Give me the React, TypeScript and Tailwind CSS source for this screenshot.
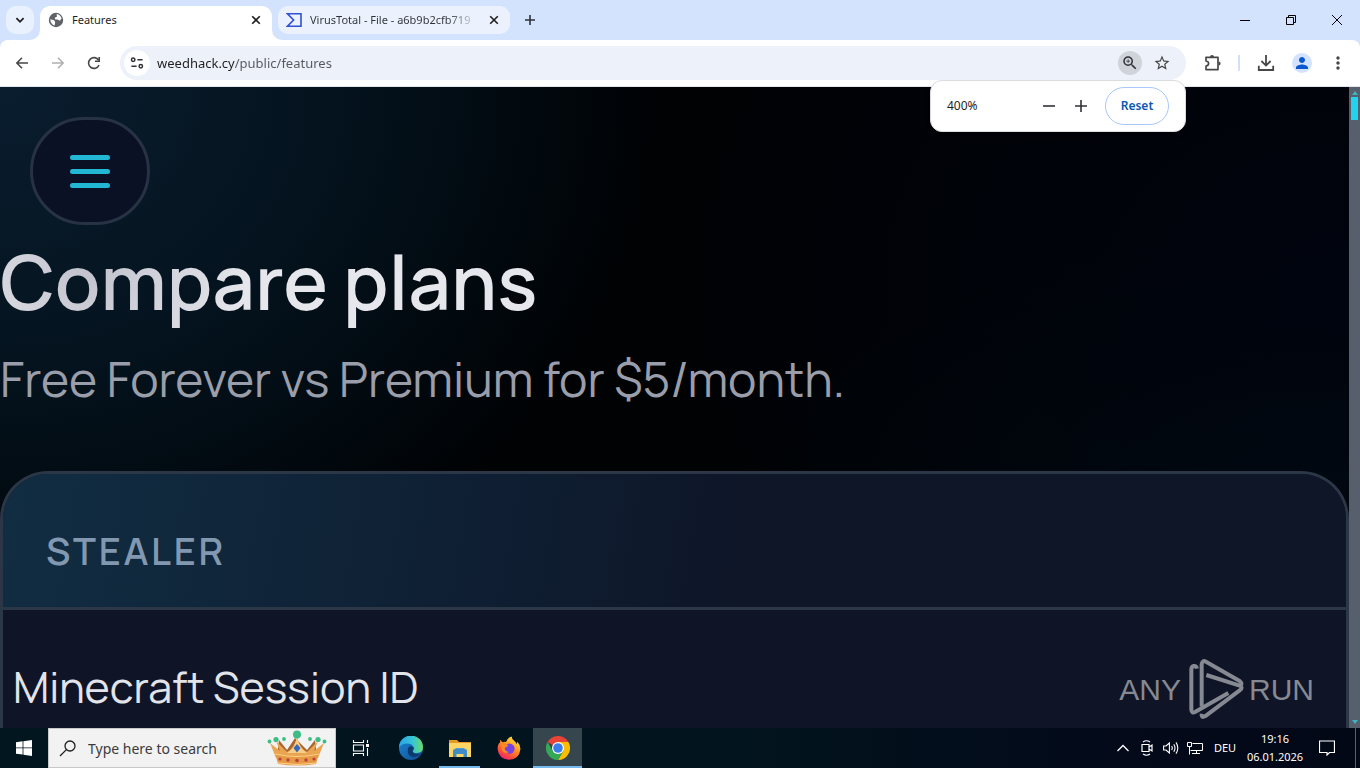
import React, { useState } from "react";
import { MdMoreVert, MdPerson, MdStarBorder, MdZoomIn } from "react-icons/md";

const iconButton =
  "flex items-center justify-center shrink-0 text-[#474747] cursor-pointer";

const GlobeIcon = () => (
  <svg viewBox="0 0 16 16" className="size-4 shrink-0">
    <circle cx="8" cy="8" r="7.2" fill="#5f6368" />
    <path
      d="M2.3 7.2 L6 8.2 L7.2 10 L6.6 13.6 Q2.6 12.2 2.3 7.2Z M8.6 2 Q12.6 2.6 13.6 6.6 L11.8 8.8 L9.6 7.6 L7.4 7.4 L6.6 6 L9 4.6Z"
      fill="#fff"
    />
  </svg>
);

const VirusTotalIcon = () => (
  <svg viewBox="0 0 16 16" className="size-4 shrink-0">
    <path
      d="M1.5 1.8 H15 V14.2 H1.5 L7.6 8Z"
      fill="none"
      stroke="#3050d8"
      strokeWidth="1.6"
    />
  </svg>
);

const CloseIcon = ({ className = "size-3" }) => (
  <svg viewBox="0 0 12 12" className={className}>
    <path
      d="M2.2 2.2 L9.8 9.8 M9.8 2.2 L2.2 9.8"
      stroke="#1f1f1f"
      strokeWidth="1.6"
      fill="none"
    />
  </svg>
);

const TabFlare = ({ className }) => (
  <svg viewBox="0 0 10 10" className={className}>
    <path d="M10 0 V10 H0 A10 10 0 0 0 10 0Z" fill="#fff" />
  </svg>
);

const TabStrip = () => (
  <div className="flex h-10 shrink-0 bg-[#d3e3fd]">
    <button
      aria-label="Search tabs"
      className="ml-1.5 mt-1.5 flex size-7 items-center justify-center rounded-[10px] bg-[#e9f1fe]"
    >
      <svg viewBox="0 0 10 10" className="size-2.5">
        <path
          d="M1.4 3.2 L5 6.8 L8.6 3.2"
          fill="none"
          stroke="#1f1f1f"
          strokeWidth="1.8"
        />
      </svg>
    </button>
    <div className="relative ml-1.5 mt-1.5 flex w-[232px] items-center rounded-t-[10px] bg-white pb-1.5 pl-2">
      <TabFlare className="absolute bottom-0 right-full size-2.5" />
      <TabFlare className="absolute bottom-0 left-full size-2.5 -scale-x-100" />
      <GlobeIcon />
      <span className="ml-2 flex-1 text-[11px] text-[#1f1f1f]">Features</span>
      <button aria-label="Close Features" className="mr-2.5">
        <CloseIcon />
      </button>
    </div>
    <div className="ml-1.5 mt-1.5 flex h-7 w-[232px] items-center rounded-[10px] bg-[#ebf2fe] pl-2">
      <VirusTotalIcon />
      <span className="ml-2 flex-1 whitespace-nowrap bg-[linear-gradient(90deg,#303236_80%,#d5dbe6_97%)] bg-clip-text text-[11px] text-transparent">
        VirusTotal - File - a6b9b2cfb719
      </span>
      <button aria-label="Close VirusTotal" className="ml-2 mr-2.5">
        <CloseIcon />
      </button>
    </div>
    <button
      aria-label="New tab"
      className="ml-1.5 mt-1.5 flex size-7 items-center justify-center"
    >
      <svg viewBox="0 0 12 12" className="size-3">
        <path d="M6 1 V11 M1 6 H11" stroke="#303236" strokeWidth="1.6" />
      </svg>
    </button>
    <div className="ml-auto flex">
      <button
        aria-label="Minimize"
        className="flex w-[46px] items-center justify-center"
      >
        <svg viewBox="0 0 10 10" className="size-2.5">
          <path d="M0 5.5 H10" stroke="#000" />
        </svg>
      </button>
      <button
        aria-label="Restore"
        className="flex w-[46px] items-center justify-center"
      >
        <svg viewBox="0 0 10 10" className="size-2.5">
          <path
            d="M0.5 2.5 H7.5 V9.5 H0.5Z M2.5 2.5 V0.5 H9.5 V7.5 H7.5"
            fill="none"
            stroke="#000"
          />
        </svg>
      </button>
      <button
        aria-label="Close window"
        className="flex w-[46px] items-center justify-center"
      >
        <svg viewBox="0 0 10 10" className="size-2.5">
          <path d="M0 0 L10 10 M10 0 L0 10" stroke="#000" />
        </svg>
      </button>
    </div>
  </div>
);

const Toolbar = () => {
  const [url, setUrl] = useState("weedhack.cy/public/features");
  return (
    <div className="shrink-0 bg-[#d3e3fd]">
      <div className="flex h-[47px] items-center rounded-t-lg border-b border-[#e3e6ea] bg-white px-1">
        <button aria-label="Back" className={`${iconButton} w-9`}>
          <svg viewBox="0 0 12 12" className="size-3">
            <path
              d="M12 6 H1 M6 0.8 L0.9 6 L6 11.2"
              fill="none"
              stroke="#474747"
              strokeWidth="1.5"
            />
          </svg>
        </button>
        <button aria-label="Forward" className={`${iconButton} w-9`}>
          <svg viewBox="0 0 12 12" className="size-3">
            <path
              d="M0 6 H11 M6 0.8 L11.1 6 L6 11.2"
              fill="none"
              stroke="#b0b0b0"
              strokeWidth="1.5"
            />
          </svg>
        </button>
        <button aria-label="Reload" className={`${iconButton} w-9`}>
          <svg viewBox="0 0 14 14" className="size-3.5">
            <path
              d="M12 9 A5.4 5.4 0 1 1 11.6 4.2"
              fill="none"
              stroke="#474747"
              strokeWidth="1.6"
            />
            <path
              d="M12.2 1 V5.2 H8"
              fill="none"
              stroke="#474747"
              strokeWidth="1.6"
            />
          </svg>
        </button>
        <div className="ml-2 flex h-[34px] flex-1 items-center rounded-full bg-[#edf1fa] pl-1">
          <button
            aria-label="View site information"
            className="flex size-[26px] items-center justify-center rounded-full bg-white"
          >
            <svg viewBox="0 0 14 12" className="h-3 w-3.5">
              <g fill="none" stroke="#303236" strokeWidth="1.5">
                <circle cx="3.2" cy="2.8" r="1.7" />
                <path d="M7.4 2.8 H12.6 M1.4 9.2 H6.6" />
                <circle cx="10.8" cy="9.2" r="1.7" />
              </g>
            </svg>
          </button>
          <input
            aria-label="Address and search bar"
            value={url}
            onChange={(e) => setUrl(e.target.value)}
            className="ml-[7px] min-w-0 flex-1 bg-[linear-gradient(90deg,#1f1f1f_78px,#54575c_78px)] bg-clip-text pt-0.5 text-[13px] text-transparent outline-none"
          />
          <button
            aria-label="Zoom"
            className="mr-2 flex size-6 items-center justify-center rounded-full bg-[#cfd3da] text-[#303236]"
          >
            <MdZoomIn className="size-[18px]" />
          </button>
          <button
            aria-label="Bookmark this tab"
            className="mr-3 flex size-6 items-center justify-center text-[#474747]"
          >
            <MdStarBorder className="size-[18px]" />
          </button>
        </div>
        <button aria-label="Extensions" className={`${iconButton} ml-2 w-9`}>
          <svg viewBox="0 0 18 18" className="size-[18px]">
            <path
              d="M3 3.4 H15 V15.6 H3 V12 Q5.6 11.6 5.6 9.5 Q5.6 7.4 3 7Z"
              fill="none"
              stroke="#474747"
              strokeWidth="1.7"
              strokeLinejoin="round"
            />
            <path
              d="M7 3 A2 2 0 0 1 11 3Z M15.6 7.4 A2 2 0 0 1 15.6 11.4Z"
              fill="#474747"
            />
          </svg>
        </button>
        <span className="mx-2 h-4 w-0.5 bg-[#d3e0f6]" />
        <button aria-label="Downloads" className={`${iconButton} w-9`}>
          <svg viewBox="0 0 18 18" className="size-[18px]">
            <path
              d="M9 1 V11.4 M4.4 7 L9 11.6 L13.6 7 M1.8 11.8 V16 H16.2 V11.8"
              fill="none"
              stroke="#474747"
              strokeWidth="1.8"
            />
          </svg>
        </button>
        <button aria-label="Profile" className={`${iconButton} w-9`}>
          <span className="flex size-5 items-center justify-center rounded-full bg-[#d3e3fd] text-[#0b57d0]">
            <MdPerson className="size-[18px]" />
          </span>
        </button>
        <button aria-label="Menu" className={`${iconButton} w-9`}>
          <MdMoreVert className="size-5" />
        </button>
      </div>
    </div>
  );
};

const ZoomBubble = () => (
  <div className="absolute right-[174px] top-20 flex h-[52px] w-64 items-center rounded-xl border border-[#dadce0] bg-white pl-4 pr-4 shadow-md">
    <span className="flex-1 text-[12px] text-[#1f1f1f]">400%</span>
    <button aria-label="Make text smaller" className={`${iconButton} w-8`}>
      <svg viewBox="0 0 12 12" className="size-3">
        <path d="M0 6 H12" stroke="#303236" strokeWidth="1.6" />
      </svg>
    </button>
    <button aria-label="Make text larger" className={`${iconButton} mr-2 w-8`}>
      <svg viewBox="0 0 12 12" className="size-3">
        <path d="M6 0 V12 M0 6 H12" stroke="#303236" strokeWidth="1.6" />
      </svg>
    </button>
    <button className="h-[38px] w-16 rounded-full border border-[#a8c7fa] text-[12px] font-semibold text-[#0b57b0]">
      Reset
    </button>
  </div>
);

const Watermark = () => (
  <div className="absolute bottom-2 right-[46px] flex items-center text-[#868992]">
    <span className="font-['Liberation_Sans',sans-serif] text-[30px]">ANY</span>
    <svg viewBox="16 16 168 184" className="ml-2 mr-1 h-[62px] w-14">
      <path
        d="M40 47 Q38 38 30 39 Q23 41 23 50 V170 Q24 182 34 177 L134 120 M54 160 V34 Q56 20 67 26 L168 84 Q180 94 166 100 M68 66 L168 98 Q180 104 168 112 L64 190 Q52 196 54 182"
        fill="none"
        stroke="currentColor"
        strokeWidth="12"
        strokeLinejoin="round"
      />
    </svg>
    <span className="font-['Liberation_Sans',sans-serif] text-[30px]">RUN</span>
  </div>
);

const Scrollbar = () => (
  <div className="flex w-[11px] shrink-0 flex-col items-center bg-[#585f6c] py-1">
    <span className="border-x-[3px] border-b-4 border-x-transparent border-b-[#3bb5c4]" />
    <span className="mt-0.5 h-[23px] w-[7px] bg-[#22d3ee]" />
    <span className="mt-auto border-x-[3px] border-t-4 border-x-transparent border-t-[#3bb5c4]" />
  </div>
);

const FeaturesPage = () => (
  <div className="relative flex min-h-0 flex-1 overflow-hidden font-['Manrope','Inter',sans-serif]">
    <main className="min-w-0 flex-1 overflow-hidden bg-[#000204] bg-[radial-gradient(ellipse_660px_560px_at_0%_0%,#0a1d2f_0%,#04131e_50%,transparent_100%),radial-gradient(ellipse_700px_500px_at_100%_30%,#00040e_0%,transparent_100%),radial-gradient(ellipse_600px_240px_at_100%_60%,#010d14_0%,transparent_100%)]">
      <button
        aria-label="Open menu"
        className="ml-[30px] mt-[30px] flex h-[108px] w-[120px] items-center justify-center rounded-full border-[3px] border-[#273244] bg-[#0b1124]"
      >
        <span className="flex flex-col gap-[9px]">
          <span className="h-[5px] w-10 rounded-full bg-[#22b8d3]" />
          <span className="h-[5px] w-10 rounded-full bg-[#22b8d3]" />
          <span className="h-[5px] w-10 rounded-full bg-[#22b8d3]" />
        </span>
      </button>
      <h1 className="mt-2 whitespace-nowrap bg-[radial-gradient(circle_at_90px_30px,#c0c1cc_0%,#e6e7ec_160px)] bg-clip-text text-[75px] font-semibold leading-[98px] text-transparent">
        Compare plans
      </h1>
      <p className="mt-3 whitespace-nowrap text-[48px] leading-[72px] text-[#9a9eaa]">
        Free Forever vs Premium for $5/month.
      </p>
      <table className="mt-14 block overflow-hidden rounded-t-[48px] border-[3px] border-b-0 border-[#2b3647] bg-[#0f1526] text-left">
        <thead className="block bg-[linear-gradient(100deg,#112d42_0%,#0f1f33_35%,#0e1628_55%)]">
          <tr className="block border-b-[3px] border-[#2b3647]">
            <th
              scope="col"
              className="block px-[43px] pb-8 pt-[52px] text-[38px] font-semibold leading-[49px] tracking-[0.07em] text-[#8298b0]"
            >
              STEALER
            </th>
          </tr>
        </thead>
        <tbody className="block">
          <tr className="block">
            <td className="block px-2.5 py-[47px] text-[43px] leading-[60px] text-[#e2e4ea]">
              Minecraft Session ID
            </td>
          </tr>
        </tbody>
      </table>
    </main>
    <Scrollbar />
    <Watermark />
  </div>
);

const CrownIcon = () => (
  <svg viewBox="0 0 64 36" className="h-9 w-16 shrink-0">
    <path d="M14 10 L22 20 L30 8 L42 20 L50 10 L52 26 H12Z" fill="#a8662f" />
    <path
      d="M5 13 L15 21 L11 11 L22 22 Q30 18 32 6 Q34 18 42 22 L53 11 L49 21 L59 13 L53 28 H11Z"
      fill="#e9a552"
    />
    <path d="M32 7 Q34 18 42 23 H22 Q30 18 32 7Z" fill="#f8cd86" />
    <path d="M10 23 Q32 29 54 23 L51 34 Q32 37 13 34Z" fill="#e79a46" />
    <path
      d="M10 24 Q32 29 54 24 M12.5 33 Q32 36 51.5 33"
      stroke="#ffd28c"
      strokeWidth="1"
      fill="none"
    />
    <g fill="#b8433c">
      <circle cx="15" cy="29" r="1.6" />
      <circle cx="23" cy="30" r="1.7" />
      <circle cx="32" cy="30.5" r="1.8" />
      <circle cx="41" cy="30" r="1.7" />
      <circle cx="49" cy="29" r="1.6" />
    </g>
    <path d="M32 14 L35.5 18 L32 22.5 L28.5 18Z" fill="#3468bd" />
    <g fill="#3bbd85">
      <circle cx="32" cy="4.5" r="4" />
      <circle cx="11" cy="9.5" r="2.6" />
      <circle cx="53" cy="9.5" r="2.6" />
      <circle cx="4.5" cy="11.5" r="1.9" />
      <circle cx="59.5" cy="11.5" r="1.9" />
      <circle cx="19" cy="9" r="1.9" />
      <circle cx="45" cy="9" r="1.9" />
    </g>
  </svg>
);

const EdgeIcon = () => (
  <svg viewBox="0 0 24 24" className="size-6">
    <defs>
      <linearGradient id="edgeTop" x1="0" y1="0.4" x2="1" y2="0.4">
        <stop offset="0" stopColor="#2aa4e8" />
        <stop offset="0.55" stopColor="#35c3d6" />
        <stop offset="1" stopColor="#68dc6c" />
      </linearGradient>
      <linearGradient id="edgeBottom" x1="0" y1="0" x2="1" y2="1">
        <stop offset="0" stopColor="#1988d8" />
        <stop offset="1" stopColor="#114a8c" />
      </linearGradient>
    </defs>
    <circle cx="12" cy="12" r="12" fill="url(#edgeBottom)" />
    <path
      d="M0 11.5 A12 12 0 0 1 24 11.6 Q24 17 18 17 Q13.4 17 13.8 14.8 Q15.6 13 14.6 11 Q12.8 7.6 8 7.6 Q2.6 7.8 0 11.5Z"
      fill="url(#edgeTop)"
    />
    <path
      d="M9 12 Q7.4 20.6 15.2 21 Q19 21 22.2 18.2 Q18 18.6 15.4 17.4 Q12.8 16 13.8 14.6 Q15 13.4 14.4 11.4 Q11 8.6 9 12Z"
      fill="#0d3a6e"
    />
  </svg>
);

const FolderIcon = () => (
  <svg viewBox="0 0 22 20" className="h-5 w-[22px]">
    <path d="M0 2 H8 L10 4 H22 V8 H0Z" fill="#e59a25" />
    <path d="M0 5 H22 V19 H0Z" fill="#fbd664" />
    <path d="M4 19 V13 Q4 11 6 11 H16 Q18 11 18 13 V19 H14.5 V16 H7.5 V19Z" fill="#3f8cc8" />
    <path d="M6.5 11 V10 H15.5 V11Z" fill="#4e9dd8" />
  </svg>
);

const FirefoxIcon = () => (
  <svg viewBox="0 0 24 24" className="size-6">
    <defs>
      <linearGradient id="foxBody" x1="0.8" y1="0" x2="0.2" y2="1">
        <stop offset="0" stopColor="#fff04a" />
        <stop offset="0.4" stopColor="#ff9a20" />
        <stop offset="0.75" stopColor="#ff4a3c" />
        <stop offset="1" stopColor="#e5188a" />
      </linearGradient>
    </defs>
    <path
      d="M3.4 3.6 Q4 6 6 6.2 Q7.4 5.6 9 6 Q10.8 1.4 14.8 0.4 Q14.4 3 17.4 5 Q19 6 19.4 8 Q20.4 7 20.2 5.4 Q23.6 9 23.4 13.2 Q22.2 23.4 12 23.8 Q1.6 23.2 0.6 13 Q0.6 8.4 3 6.6Z"
      fill="url(#foxBody)"
    />
    <circle cx="12.4" cy="12.6" r="5.2" fill="#7542e5" />
    <path
      d="M4.6 8.2 Q8 7 11.4 9.2 Q9.8 11.6 7.6 11.8 Q8 15.6 12 16 Q7.4 18.4 5 14.4 Q4 11 4.6 8.2Z"
      fill="#ff8a1e"
    />
  </svg>
);

const ChromeIcon = () => (
  <svg viewBox="0 0 24 24" className="size-6">
    <path d="M12 12 L1.6 6 A12 12 0 0 1 22.4 6Z" fill="#ea4335" />
    <path d="M12 6 H22.4 A12 12 0 0 1 12 24 L17.2 15Z" fill="#fbbc04" />
    <path d="M1.6 6 A12 12 0 0 0 12 24 L17.2 15 L6.8 15Z" fill="#34a853" />
    <circle cx="12" cy="12" r="6" fill="#fff" />
    <circle cx="12" cy="12" r="4.8" fill="#3b7ded" />
  </svg>
);

const Taskbar = () => (
  <footer className="flex h-10 shrink-0 bg-[linear-gradient(90deg,#02161f_0%,#02141d_55%,#030a1a_80%,#030817_100%)] text-[11px] text-white">
    <button aria-label="Start" className="flex w-12 items-center justify-center">
      <svg viewBox="0 0 16 16" className="size-4">
        <path
          d="M0 2.2 L6.6 1.3 V7.5 H0Z M7.4 1.2 L16 0 V7.5 H7.4Z M0 8.3 H6.6 V14.6 L0 13.7Z M7.4 8.3 H16 V16 L7.4 14.8Z"
          fill="#fff"
        />
      </svg>
    </button>
    <div className="flex w-72 items-center border border-[#c8c8c8] bg-[#f2f2f2] pl-2.5 pr-1.5">
      <svg viewBox="0 0 18 18" className="size-[18px] shrink-0">
        <path
          d="M1 17 L7.4 10.6"
          stroke="#1f1f1f"
          strokeWidth="1.3"
        />
        <circle
          cx="11"
          cy="7"
          r="5"
          fill="none"
          stroke="#1f1f1f"
          strokeWidth="1.3"
        />
      </svg>
      <input
        aria-label="Search"
        placeholder="Type here to search"
        className="ml-[11px] min-w-0 flex-1 text-[14px] text-[#3b3b3b] outline-none placeholder:text-[#3b3b3b]"
      />
      <CrownIcon />
    </div>
    <button
      aria-label="Task view"
      className="flex w-[50px] items-center justify-center"
    >
      <svg viewBox="0 0 18 16" className="h-4 w-[18px]">
        <path
          d="M1.5 0 V2.5 H11.5 V0 M1.5 5 H11.5 V11 H1.5Z M1.5 16 V13.5 H11.5 V16 M15.5 0 V3 M15.5 8 V16"
          fill="none"
          stroke="#fff"
          strokeWidth="1.1"
        />
        <path d="M14 4 H17 V7 H14Z" fill="#fff" />
      </svg>
    </button>
    <button aria-label="Edge" className="flex w-[49px] items-center justify-center">
      <EdgeIcon />
    </button>
    <button
      aria-label="File Explorer"
      className="mx-1 flex w-[41px] items-center justify-center border-b-2 border-[#76b9ed] pt-0.5"
    >
      <FolderIcon />
    </button>
    <button
      aria-label="Firefox"
      className="flex w-[49px] items-center justify-center"
    >
      <FirefoxIcon />
    </button>
    <button
      aria-label="Chrome"
      className="flex w-[49px] items-center justify-center border-b-2 border-[#76b9ed] bg-[#35464f] pt-0.5"
    >
      <ChromeIcon />
    </button>
    <div className="ml-auto flex">
      <button
        aria-label="Show hidden icons"
        className="flex w-6 items-center justify-center"
      >
        <svg viewBox="0 0 12 8" className="h-2 w-3">
          <path d="M0.5 7 L6 1.5 L11.5 7" fill="none" stroke="#fff" strokeWidth="1.3" />
        </svg>
      </button>
      <button
        aria-label="Meet now"
        className="flex w-6 items-center justify-center"
      >
        <svg viewBox="0 0 14 16" className="h-4 w-3.5">
          <path
            d="M2 4.5 H9 V11.5 H2Z M9 7 L12 5 V11 L9 9 M3 2 Q6.5 -0.5 10 2 M3 14 Q6.5 16.5 10 14"
            fill="none"
            stroke="#fff"
            strokeWidth="1.2"
          />
        </svg>
      </button>
      <button
        aria-label="Volume"
        className="flex w-6 items-center justify-center"
      >
        <svg viewBox="0 0 16 16" className="size-4">
          <path
            d="M0.6 6 H3 L6.4 3 V13 L3 10 H0.6Z M8.6 6 Q10 8 8.6 10 M10.8 4.2 Q13.2 8 10.8 11.8 M13 2.4 Q16.6 8 13 13.6"
            fill="none"
            stroke="#fff"
            strokeWidth="1.1"
          />
        </svg>
      </button>
      <button
        aria-label="Network"
        className="flex w-6 items-center justify-center"
      >
        <svg viewBox="0 0 16 14" className="h-3.5 w-4">
          <path
            d="M5.5 2.5 H15.5 V9.5 H3.5 M0.5 1.5 H4.5 V5.5 H0.5Z M2.5 5.5 V13.5 M9.5 9.5 V12.5 M5 12.5 H13"
            fill="none"
            stroke="#fff"
          />
        </svg>
      </button>
      <button className="w-9">DEU</button>
      <time className="flex w-16 flex-col justify-center text-center leading-[18px]">
        <span>19:16</span>
        <span>06.01.2026</span>
      </time>
      <button
        aria-label="Notifications"
        className="mr-2 flex w-10 items-center justify-center"
      >
        <svg viewBox="0 0 16 16" className="size-4">
          <path
            d="M0.5 1 H15.5 V12.5 H10.5 L8 15 V12.5 H0.5Z"
            fill="none"
            stroke="#fff"
            strokeWidth="1.2"
          />
        </svg>
      </button>
      <button
        aria-label="Show desktop"
        className="w-[5px] border-l border-[#5a6070]"
      />
    </div>
  </footer>
);

const App = () => {
  return (
    <div className="relative flex h-screen flex-col overflow-hidden font-['Segoe_UI','Noto_Sans','Open_Sans',sans-serif]">
      <TabStrip />
      <Toolbar />
      <FeaturesPage />
      <ZoomBubble />
      <Taskbar />
    </div>
  );
};

export default App;
